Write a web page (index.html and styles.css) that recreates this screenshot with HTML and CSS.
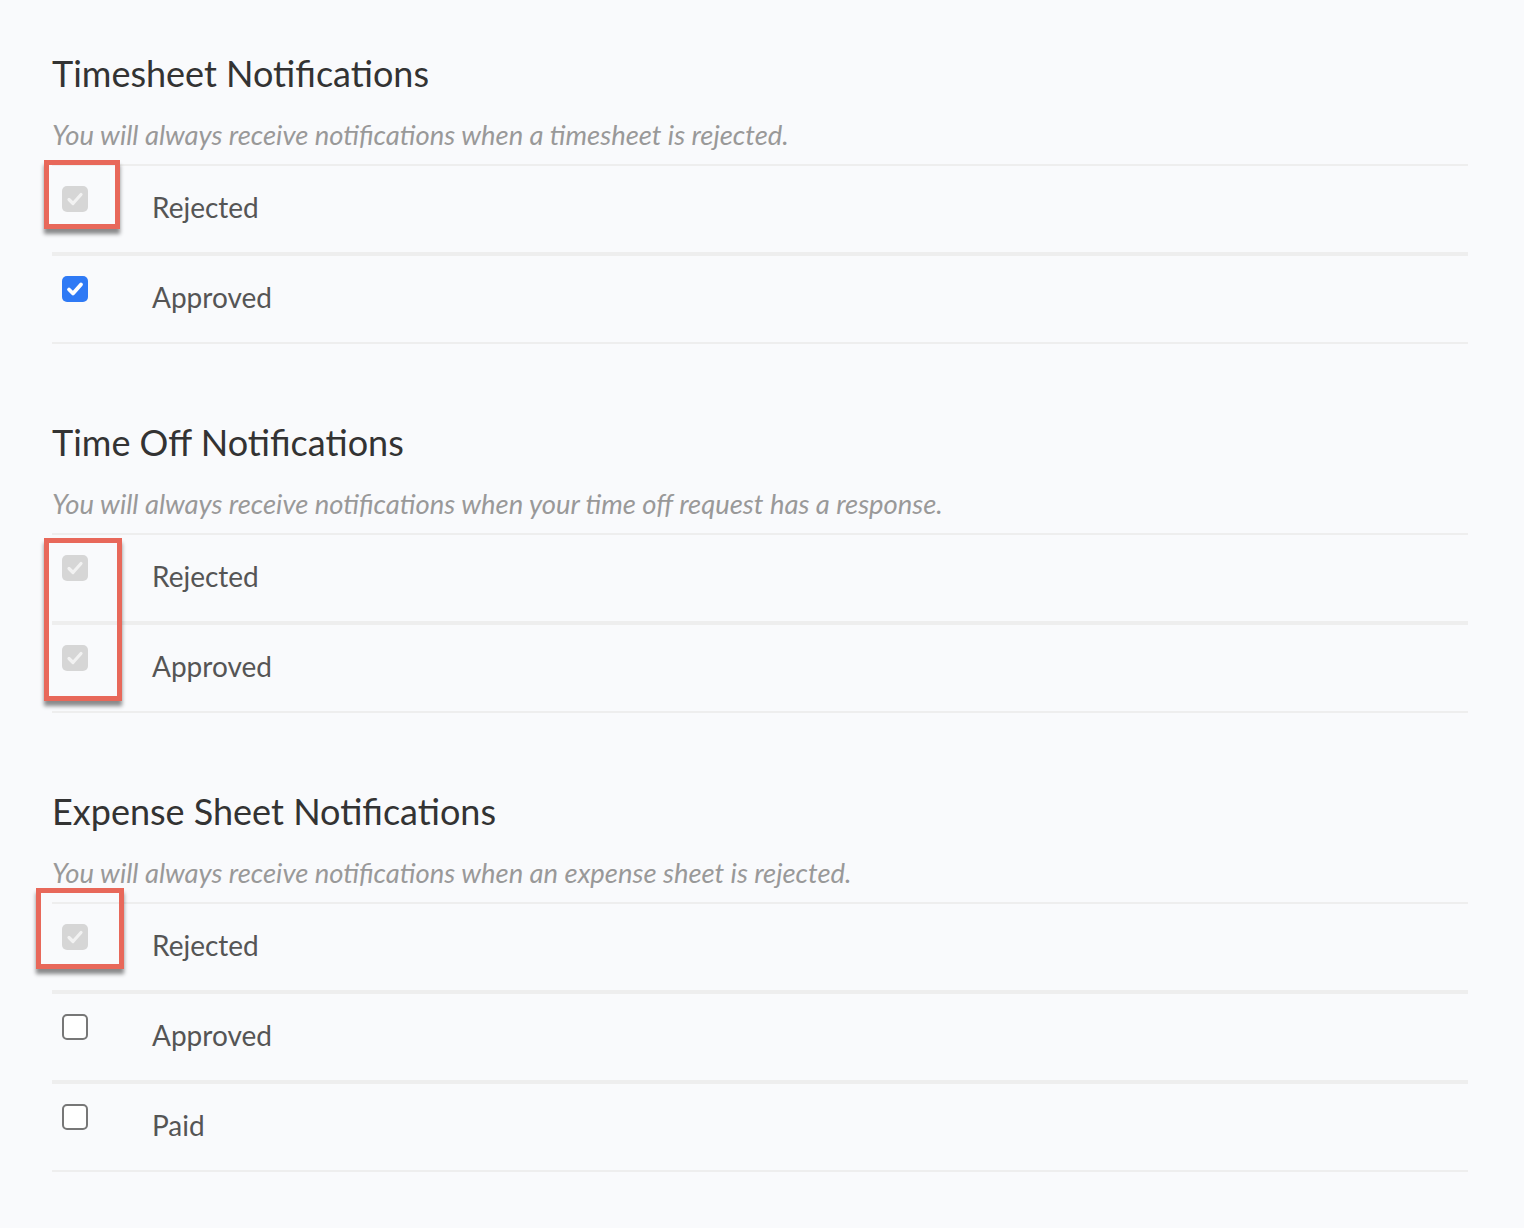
FILE: index.html
```html
<!DOCTYPE html>
<html lang="en">

<head>
    <meta charset="UTF-8">
    <meta name="viewport" content="width=device-width, initial-scale=1.0">
    <title>Notification settings</title>
    <link rel="stylesheet" href="styles.css">
</head>

<body>
    <div class="maincontainer">
        <div class="section">
            <h2 class="sectiontitle">Timesheet Notifications</h2>
            <p class="sectionnote">You will always receive notifications when a timesheet is rejected.</p>
            <div class="optionlist">
                <div class="optionrow">
                    <span class="checkbox disabled"><svg viewBox="0 0 26 26"><path d="M7 13.5 L11 17.5 L19 8.5" /></svg></span>
                    <span class="optionlabel">Rejected</span>
                </div>
                <div class="optionrow">
                    <span class="checkbox checked"><svg viewBox="0 0 26 26"><path d="M7 13.5 L11 17.5 L19 8.5" /></svg></span>
                    <span class="optionlabel">Approved</span>
                </div>
                <div class="highlight highlightone"></div>
            </div>
        </div>

        <div class="section">
            <h2 class="sectiontitle">Time Off Notifications</h2>
            <p class="sectionnote">You will always receive notifications when your time off request has a response.</p>
            <div class="optionlist">
                <div class="optionrow">
                    <span class="checkbox disabled"><svg viewBox="0 0 26 26"><path d="M7 13.5 L11 17.5 L19 8.5" /></svg></span>
                    <span class="optionlabel">Rejected</span>
                </div>
                <div class="optionrow">
                    <span class="checkbox disabled"><svg viewBox="0 0 26 26"><path d="M7 13.5 L11 17.5 L19 8.5" /></svg></span>
                    <span class="optionlabel">Approved</span>
                </div>
                <div class="highlight highlighttwo"></div>
            </div>
        </div>

        <div class="section">
            <h2 class="sectiontitle">Expense Sheet Notifications</h2>
            <p class="sectionnote">You will always receive notifications when an expense sheet is rejected.</p>
            <div class="optionlist">
                <div class="optionrow">
                    <span class="checkbox disabled"><svg viewBox="0 0 26 26"><path d="M7 13.5 L11 17.5 L19 8.5" /></svg></span>
                    <span class="optionlabel">Rejected</span>
                </div>
                <div class="optionrow">
                    <span class="checkbox"></span>
                    <span class="optionlabel">Approved</span>
                </div>
                <div class="optionrow">
                    <span class="checkbox"></span>
                    <span class="optionlabel">Paid</span>
                </div>
                <div class="highlight highlightthree"></div>
            </div>
        </div>
    </div>
</body>

</html>
```

FILE: styles.css
```css
* {
    margin: 0;
    padding: 0;
    box-sizing: border-box;
}

body {
    background-color: #f9fafc;
    font-family: Lato, "Liberation Sans", sans-serif;
}

.maincontainer {
    padding: 51px 56px 0 52px;
    display: flex;
    flex-direction: column;
    gap: 76px;
}

.sectiontitle {
    font-size: 36px;
    line-height: 44px;
    font-weight: 400;
    color: #333333;
}

.sectionnote {
    margin-top: 24px;
    font-size: 27.4px;
    line-height: 32px;
    font-style: italic;
    color: #999999;
}

.optionlist {
    position: relative;
    margin-top: 13px;
}

.optionrow {
    height: 90px;
    padding: 20px 0 0 10px;
    border-top: 2px solid #eeeeee;
    border-bottom: 2px solid #eeeeee;
    display: flex;
    align-items: flex-start;
}

.checkbox {
    width: 26px;
    height: 26px;
    flex-shrink: 0;
    border: 2px solid #777777;
    border-radius: 5px;
    background-color: #ffffff;
    display: flex;
}

.checkbox svg {
    width: 100%;
    height: 100%;
}

.checkbox path {
    fill: none;
    stroke-width: 3.2;
    stroke-linecap: round;
    stroke-linejoin: round;
}

.checkbox.disabled {
    border: none;
    background-color: #d6d6d6;
}

.checkbox.disabled path {
    stroke: #f2f2f2;
}

.checkbox.checked {
    border: none;
    background-color: #2f7af5;
}

.checkbox.checked path {
    stroke: #ffffff;
    stroke-width: 3.8;
}

.optionlabel {
    margin: 4px 0 0 64px;
    font-size: 28px;
    line-height: 34px;
    color: #555555;
}

/* annotation boxes drawn over the checkboxes */
.highlight {
    position: absolute;
    border: 5px solid #e8685a;
    box-shadow: 0px 5px 4px rgba(0, 0, 0, 0.45);
}

.highlightone {
    left: -8px;
    top: -4px;
    width: 76px;
    height: 69px;
}

.highlighttwo {
    left: -8px;
    top: 5px;
    width: 78px;
    height: 163px;
}

.highlightthree {
    left: -16px;
    top: -14px;
    width: 88px;
    height: 81px;
}
```
